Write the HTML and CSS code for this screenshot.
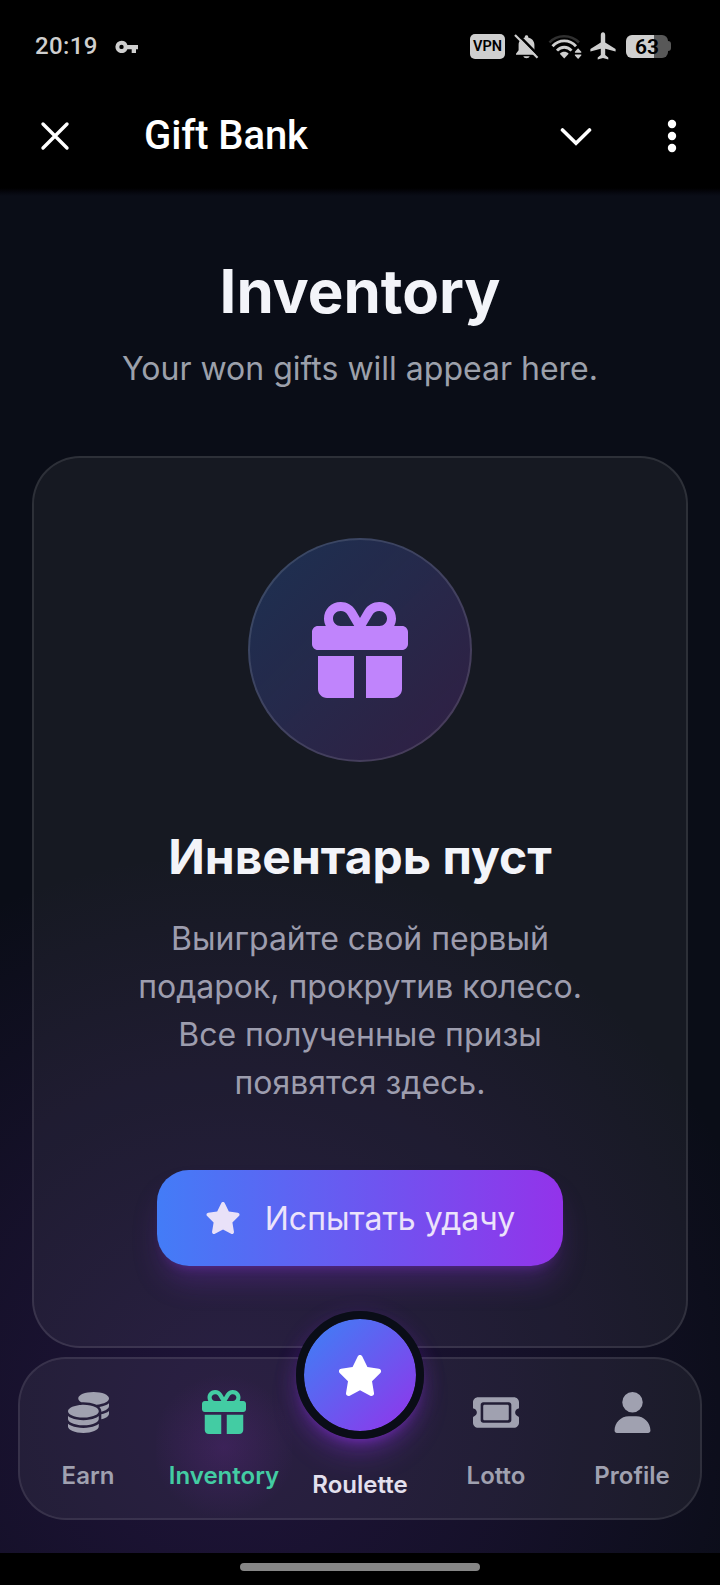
FILE: index.html
```html
<!DOCTYPE html>
<html lang="ru">
<head>
<meta charset="utf-8">
<title>Gift Bank</title>
<link rel="stylesheet" href="styles.css">
</head>
<body>
<svg class="defs" aria-hidden="true">
  <symbol id="gift" viewBox="0 0 512 512"><path d="M190.5 68.8L225.3 128H224 152c-22.1 0-40-17.9-40-40s17.9-40 40-40h2.2c14.9 0 28.8 7.9 36.3 20.8zM64 88c0 14.4 3.5 28 9.6 40H32c-17.7 0-32 14.3-32 32v64c0 17.7 14.3 32 32 32H480c17.7 0 32-14.3 32-32V160c0-17.7-14.3-32-32-32H438.4c6.1-12 9.6-25.6 9.6-40c0-48.6-39.4-88-88-88h-2.2c-31.9 0-61.5 16.9-77.7 44.4L256 85.5l-24.1-41C215.7 16.9 186.1 0 154.2 0H152C103.4 0 64 39.4 64 88zm336 0c0 22.1-17.9 40-40 40H288h-1.3l34.8-59.2C329.1 55.9 342.9 48 357.8 48H360c22.1 0 40 17.9 40 40zM32 288V464c0 26.5 21.5 48 48 48H224V288H32zM288 512H432c26.5 0 48-21.5 48-48V288H288V512z"/></symbol>
  <symbol id="star" viewBox="0 0 576 512"><path d="M316.9 18C311.6 7 300.4 0 288.1 0s-23.4 7-28.8 18L195 150.3 51.4 171.5c-12 1.8-22 10.2-25.7 21.7s-.7 24.2 7.9 32.7L137.8 329 113.2 474.7c-2 12 3 24.2 12.9 31.3s23 8 33.8 2.3l128.3-68.5 128.3 68.5c10.8 5.7 23.9 4.9 33.8-2.3s14.9-19.3 12.9-31.3L438.5 329 542.7 225.9c8.6-8.5 11.7-21.2 7.9-32.7s-13.7-19.9-25.7-21.7L381.2 150.3 316.9 18z"/></symbol>
</svg>
<div class="app">
  <header class="top">
    <div class="status">
      <span class="clock">20:19</span>
      <svg class="key" width="24" height="14" viewBox="0 0 24 14"><path fill="#cfcfcf" fill-rule="evenodd" d="M6.5.7a6.2 6.2 0 0 1 5.9 4.2H23V9.200h-2V13h-4.300V9.200h-4.300A6.200 6.200 0 1 1 6.500.700zm0 4a2.200 2.200 0 1 0 0 4.400a2.200 2.200 0 0 0 0-4.400z"/></svg>
      <div class="status-icons">
        <span class="vpn">VPN</span>
        <svg class="bell" width="25" height="25" viewBox="0 0 25 25"><path fill="#cfcfcf" d="M12.500 1.200c1 0 1.700.700 1.700 1.600v.6c3.700.8 6.200 3.700 6.200 7.400v5.400l3 3.600v1H2v-1l2.600-3.600v-5.400c0-3.700 2.500-6.600 6.200-7.400v-.6c0-.9.700-1.600 1.700-1.600zM9.300 22.200h6.400c-.4 1.300-1.600 2-3.200 2s-2.800-.7-3.200-2z"/><path d="M2.600-.8L25.600 22.500" stroke="#000" stroke-width="2.600"/><path d="M1 1L23.500 23.800" stroke="#cfcfcf" stroke-width="2.200"/></svg>
        <svg class="wifi" width="34" height="25" viewBox="0 0 34 25" fill="none"><path d="M1.500 8.500C9 .1 23 .1 31 8.500" stroke="#303030" stroke-width="2.600"/><path d="M4.500 12.200C11 5 21.500 5 28 12.200M9 16.700c4-4.600 10.500-4.600 14.500 0" stroke="#cfcfcf" stroke-width="2.800"/><path d="M11.800 19.800c2.600-2.600 6.300-2.600 8.900 0L16.250 24.400z" fill="#cfcfcf"/><path d="M26.900 18.800v-1l3.200-3.600 3.200 3.600v1zM26.900 20.600v1l3.200 3.400 3.200-3.400v-1z" fill="#cfcfcf"/></svg>
        <svg class="plane" width="26" height="28" viewBox="0 0 26 28"><path fill="#cfcfcf" d="M13 .3c1.400 0 2.200 1.200 2.200 2.800v7.300L25.600 17v2.400l-10.400-2.600v6.300l3.100 2.300v2L13 26l-5.300 1.400v-2l3.100-2.300v-6.300L.4 19.400V17l10.400-6.600V3.100C10.800 1.500 11.600.3 13 .3z"/></svg>
        <div class="battery"><span class="level">63</span></div><div class="nub"></div>
      </div>
    </div>
    <div class="toolbar">
      <svg class="close" width="30" height="30" viewBox="0 0 30 30" fill="none" stroke="#fff" stroke-width="3.400" stroke-linecap="round"><path d="M3 3l24 24M27 3L3 27"/></svg>
      <span class="app-name">Gift Bank</span>
      <svg class="chevron" width="32" height="20" viewBox="0 0 32 20" fill="none" stroke="#fff" stroke-width="3.600" stroke-linecap="round" stroke-linejoin="miter"><path d="M2.500 3L16 16.300L29.500 3"/></svg>
      <svg class="more" width="10" height="34" viewBox="0 0 10 34" fill="#fff"><circle cx="5" cy="5" r="4.200"/><circle cx="5" cy="17" r="4.200"/><circle cx="5" cy="29" r="4.200"/></svg>
    </div>
  </header>

  <main class="page">
    <h1 class="title">Inventory</h1>
    <p class="subtitle">Your won gifts will appear here.</p>

    <section class="card">
      <div class="badge"><svg class="badge-icon"><use href="#gift"/></svg></div>
      <h2 class="card-title">Инвентарь пуст</h2>
      <p class="card-text">Выиграйте свой первый<br>подарок, прокрутив колесо.<br>Все полученные призы<br>появятся здесь.</p>
      <button class="cta"><svg class="cta-icon"><use href="#star"/></svg><span>Испытать удачу</span></button>
    </section>

    <nav class="tabs">
      <a class="tab">
        <svg class="tab-icon" viewBox="0 0 512 512"><path d="M512 80c0 18-14.3 34.6-38.4 48c-29.1 16.1-72.5 27.500-122.300 30.900c-3.700-1.800-7.400-3.500-11.300-5C300.600 137.400 248.200 128 192 128c-8.300 0-16.400 .2-24.500 .6l-1.100-.6C142.300 114.600 128 98 128 80c0-44.200 86-80 192-80S512 35.800 512 80zM160.700 161.100c10.200-.7 20.700-1.100 31.300-1.100c62.200 0 117.400 12.300 152.500 31.400C369.300 204.900 384 221.700 384 240c0 4-.7 7.900-2.100 11.700c-4.600 13.200-17 25.300-35 35.500c-.1 .1-.3 .1-.4 .2c-.3 .2-.6 .3-.9 .5c-35 19.400-90.800 32-153.600 32c-59.600 0-112.900-11.300-148.200-29.100c-1.900-.9-3.700-1.900-5.500-2.900C14.300 274.600 0 258 0 240c0-34.800 53.400-64.500 128-75.400c10.500-1.500 21.400-2.700 32.700-3.500zM416 240c0-21.900-10.600-39.900-24.100-53.400c28.300-4.400 54.200-11.400 76.200-20.500c16.300-6.800 31.500-15.200 43.900-25.500V176c0 19.300-16.500 37.100-43.800 50.900c-14.600 7.400-32.400 13.700-52.400 18.500c.1-1.800 .2-3.500 .2-5.300zm-32 96c0 18-14.300 34.600-38.400 48c-1.800 1-3.600 1.900-5.500 2.900C304.900 404.700 251.600 416 192 416c-62.800 0-118.600-12.600-153.600-32C14.300 370.600 0 354 0 336V300.600c12.500 10.300 27.600 18.700 43.900 25.500C83.400 342.600 135.800 352 192 352s108.600-9.400 148.100-25.900c7.800-3.200 15.300-6.900 22.400-10.900c6.100-3.400 11.800-7.200 17.200-11.200c1.500-1.100 2.900-2.300 4.300-3.400V304v5.700V336zm32 0V304 278.100c19-4.200 36.500-9.500 52.100-16c16.300-6.800 31.500-15.200 43.900-25.500V272c0 10.500-5 21-14.900 30.900c-16.300 16.300-45 29.700-81.300 38.400c.1-1.700 .2-3.500 .2-5.300zM192 448c56.200 0 108.600-9.400 148.100-25.900c16.300-6.800 31.500-15.200 43.900-25.500V432c0 44.200-86 80-192 80S0 476.200 0 432V396.600c12.500 10.300 27.600 18.700 43.900 25.500C83.400 438.600 135.800 448 192 448z"/></svg>
        <span>Earn</span>
      </a>
      <a class="tab active">
        <svg class="tab-icon"><use href="#gift"/></svg>
        <span>Inventory</span>
      </a>
      <a class="tab main-tab">
        <div class="orb"><svg class="orb-icon"><use href="#star"/></svg></div>
        <span>Roulette</span>
      </a>
      <a class="tab">
        <svg class="tab-icon wide" viewBox="0 0 576 512"><path d="M64 64C28.700 64 0 92.700 0 128v64c0 8.800 7.400 15.700 15.700 18.600C34.500 217.100 48 235 48 256s-13.500 38.900-32.300 45.400C7.400 304.300 0 311.200 0 320v64c0 35.300 28.700 64 64 64H512c35.300 0 64-28.700 64-64V320c0-8.800-7.400-15.700-15.700-18.600C541.500 294.900 528 277 528 256s13.500-38.900 32.300-45.400c8.300-2.900 15.700-9.800 15.700-18.600V128c0-35.300-28.700-64-64-64H64zm64 112l0 160c0 8.800 7.200 16 16 16H432c8.800 0 16-7.200 16-16V176c0-8.800-7.200-16-16-16H144c-8.800 0-16 7.200-16 16zM96 160c0-17.700 14.300-32 32-32H448c17.700 0 32 14.300 32 32V352c0 17.700-14.300 32-32 32H128c-17.700 0-32-14.300-32-32V160z"/></svg>
        <span>Lotto</span>
      </a>
      <a class="tab">
        <svg class="tab-icon" viewBox="0 0 448 512"><path d="M224 256A128 128 0 1 0 224 0a128 128 0 1 0 0 256zm-45.700 48C79.800 304 0 383.800 0 482.300C0 498.700 13.300 512 29.700 512H418.300c16.400 0 29.700-13.300 29.700-29.700C448 383.800 368.200 304 269.700 304H178.300z"/></svg>
        <span>Profile</span>
      </a>
    </nav>
  </main>
  <footer class="home"><div class="home-bar"></div></footer>
</div>
</body>
</html>
```
FILE: styles.css
```css
* { box-sizing: border-box; }
body { margin: 0; background: #000; font-family: Inter, "Noto Sans", sans-serif; }
h1, h2, p { margin: 0; }
.defs { display: none; }
.app { width: 720px; height: 1585px; display: flex; flex-direction: column; overflow: hidden; background: #000; }

.top { height: 192px; flex: none; padding-top: 28px; font-family: Roboto, sans-serif; background: linear-gradient(#000 188px, #05060d 192px); }
.status { height: 36px; display: flex; align-items: center; padding: 0 49px 0 35px; }
.clock { margin-top: -1px; color: #cfcfcf; font-size: 24px; font-weight: 500; letter-spacing: 0.4px; }
.key { margin: 1px 0 0 17px; }
.status-icons { margin-left: auto; display: flex; align-items: center; }
.vpn { width: 35px; height: 25px; border-radius: 5px; background: #cfcfcf; color: #000; font-size: 14.5px; font-weight: 600; line-height: 25px; text-align: center; }
.bell { margin-left: 9px; }
.wifi { margin-left: 9px; }
.plane { margin-left: 8px; }
.battery { margin-left: 10px; width: 42px; height: 23px; border-radius: 6px; background: linear-gradient(90deg, #cfcfcf 28px, #585858 28px); text-align: center; color: #000; font-size: 21px; font-weight: 600; line-height: 24px; }
.nub { width: 3px; height: 10px; border-radius: 0 3px 3px 0; background: #585858; }
.toolbar { height: 80px; margin-top: 32px; display: flex; align-items: center; padding: 0 43px 0 40px; }
.app-name { color: #fff; font-size: 40px; font-weight: 500; letter-spacing: -0.1px; margin-left: 74px; margin-top: -1px; }
.chevron { margin-left: auto; margin-top: 2px; }
.more { margin-left: 75px; }

.page {
  height: 1361px; flex: none; padding: 63px 32px 0; text-align: center;
  background:
    radial-gradient(ellipse 560px 560px at 230px 1220px, rgba(94, 40, 160, .25), rgba(94, 40, 160, .14) 50%, rgba(94, 40, 160, 0)),
    linear-gradient(#05060d, rgba(10, 13, 23, 0) 4px),
    #0a0d17;
}
.title { font-size: 60px; line-height: 72px; font-weight: 700; color: #f3f4f9; }
.subtitle { margin-top: 18px; font-size: 32px; line-height: 48px; color: #9ca0ab; }

.card {
  margin-top: 63px; height: 892px; padding-top: 80px; border: 2px solid rgba(255, 255, 255, .1); border-radius: 48px;
  background: rgba(255, 255, 255, .052); display: flex; flex-direction: column; align-items: center;
}
.badge {
  width: 224px; height: 224px; border: 2px solid rgba(255, 255, 255, .12); border-radius: 50%;
  background: linear-gradient(135deg, rgba(45, 115, 210, .27), rgba(168, 60, 210, .19)) border-box;
  display: flex; align-items: center; justify-content: center;
}
.badge-icon { width: 96px; height: 96px; margin-top: -1px; fill: #c084fc; }
.card-title { margin-top: 63px; font-size: 48px; line-height: 64px; font-weight: 700; color: #f3f4f9; }
.card-text { margin-top: 26px; font-size: 32px; line-height: 48px; color: #9d9dae; }
.cta {
  margin-top: 63px; height: 96px; padding: 0 48px; border: 0; border-radius: 32px; display: flex; align-items: center; gap: 24px;
  background: linear-gradient(to right, #437cf7, #9333ea); box-shadow: 0 20px 30px -6px rgba(147, 51, 234, .25), 0 8px 12px -8px rgba(147, 51, 234, .4);
  color: #ece3fb; font: 400 32px/48px Inter, "Noto Sans", sans-serif;
}
.cta-icon { width: 36px; height: 32px; fill: #e9e1f8; }
.cta span { padding-top: 1px; }

.tabs {
  margin: 9px -14px 0; height: 163px; border: 2px solid rgba(255, 255, 255, .09); border-radius: 48px;
  background: rgba(255, 255, 255, .055); display: grid; grid-template-columns: repeat(5, 136px);
}
.tab { height: 100%; padding-top: 33px; display: flex; flex-direction: column; align-items: center; color: #a0a1b0; font-size: 24px; line-height: 32px; font-weight: 600; }
.tab-icon { height: 41px; width: 41px; fill: currentColor; margin-bottom: 27px; }
.tab-icon.wide { width: 46px; }
.active { color: #43cca3; background: radial-gradient(circle 72px at 50% 88px, rgba(147, 51, 200, .17), rgba(147, 51, 200, 0)); }
.active .tab-icon { width: 44px; height: 44px; margin: -2px 0 26px; }
.main-tab { padding-top: 0; color: #e3e0ee; }
.orb {
  width: 128px; height: 128px; flex: none; margin: -48px 0 30px; border: 8px solid #0a0d17; border-radius: 50%;
  background: linear-gradient(135deg, #3b82f6, #9333ea) padding-box;
  box-shadow: 0 20px 30px -6px rgba(147, 51, 234, .3), 0 8px 12px -8px rgba(147, 51, 234, .6), 0 4px 22px rgba(147, 51, 234, .2);
  display: flex; align-items: center; justify-content: center;
}
.orb-icon { width: 46px; height: 41px; fill: #fff; }

.home { height: 32px; display: flex; justify-content: center; padding-top: 10px; background: #000; }
.home-bar { width: 240px; height: 8px; border-radius: 4px; background: #868686; }
```
